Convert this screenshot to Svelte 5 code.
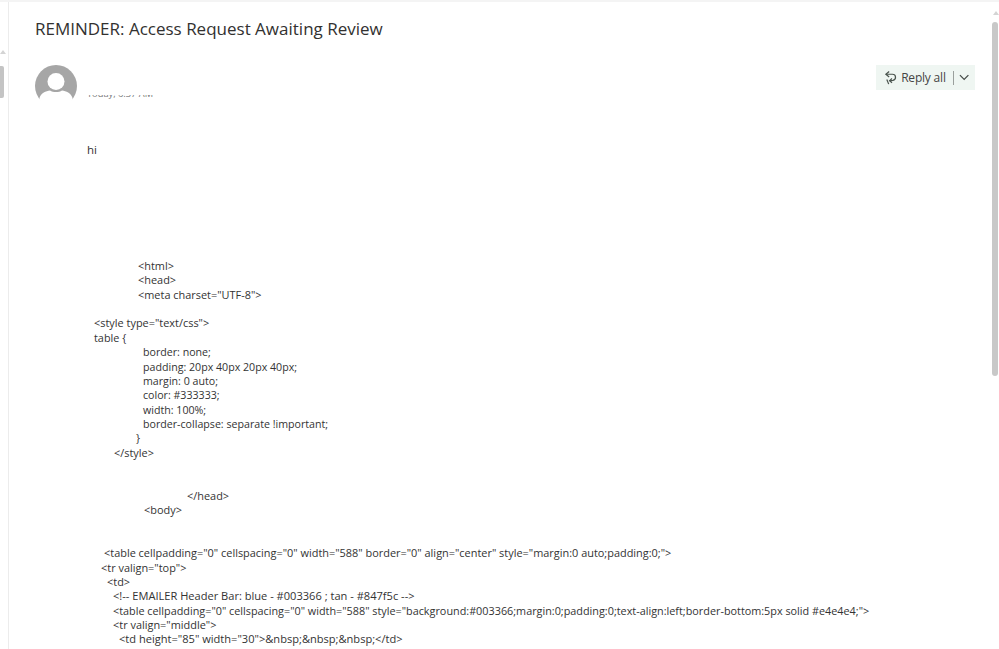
<script>
  const lines = [
    [51, '<html>', 'tag'], [51, '<head>', 'tag'], [51, '<meta charset="UTF-8">', 'tag'], [0, '', ''],
    [7, '<style type="text/css">', 'tag'], [7, 'table {', ''],
    [56, 'border: none;', 'rule'], [56, 'padding: 20px 40px 20px 40px;', 'rule'], [56, 'margin: 0 auto;', 'rule'],
    [56, 'color: #333333;', 'rule'], [56, 'width: 100%;', 'rule'], [56, 'border-collapse: separate !important;', 'rule'],
    [49, '}', ''], [27, '</style>', 'tag'], [0, '', ''], [0, '', ''],
    [100, '</head>', 'tag'], [57, '<body>', 'tag'], [0, '', ''], [0, '', ''],
    [17, '<table cellpadding="0" cellspacing="0" width="588" border="0" align="center" style="margin:0 auto;padding:0;">', 'tag'],
    [14, '<tr valign="top">', 'tag'], [20, '<td>', 'tag'],
    [26, '<!-- EMAILER Header Bar: blue - #003366 ; tan - #847f5c -->', 'note'],
    [26, '<table cellpadding="0" cellspacing="0" width="588" style="background:#003366;margin:0;padding:0;text-align:left;border-bottom:5px solid #e4e4e4;">', ''],
    [26, '<tr valign="middle">', 'tag'],
    [32, '<td height="85" width="30">&nbsp;&nbsp;&nbsp;</td>', 'note']
  ];
</script>

<div class="page">
  <div class="rail">
    <svg class="arrow" width="8" height="5" viewBox="0 0 8 5"><path d="M0 5 L3 1 L6 5 Z" fill="#d4d4d4"/></svg>
    <div class="rail-thumb"></div>
  </div>
  <main>
    <h1>REMINDER: Access Request Awaiting Review</h1>
    <div class="header">
      <svg class="avatar" width="42" height="42" viewBox="0 0 42 42">
        <circle cx="21" cy="21" r="21" fill="#a6a6a6"/>
        <circle cx="21" cy="16.5" r="8.5" fill="#fff"/>
        <path d="M4.500 33 C6 28 11 26 15 25.500 C18 27.500 24 27.500 27 25.500 C31 26 36 28 37.500 33 C38 38 30 43 21 43 C12 43 4 38 4.500 33 Z" fill="#fff"/>
      </svg>
      <div class="clip"><span>Today, 6:37 AM</span></div>
      <div class="reply">
        <svg width="14" height="16" viewBox="0 0 14 16" fill="none" stroke="#4a544e" stroke-width="1.300">
          <path d="M5.500 1 L2 4 L5.500 7"/>
          <path d="M2 4 H9 C13 4 13.500 9.500 9.500 10.500 L6 11"/>
          <path d="M8.500 13 L6 10.800 L8.500 8.500"/>
          <path d="M3 9.500 L5 14.500"/>
        </svg>
        <span class="label">Reply all</span>
        <span class="sep"></span>
        <svg width="11" height="7" viewBox="0 0 11 7" fill="none" stroke="#444a46" stroke-width="1.300"><path d="M1 1 L5.500 5.500 L10 1"/></svg>
      </div>
    </div>
    <p class="hi">hi</p>
    <div class="code">
      {#each lines as [indent, text, kind]}
        <div class="line {kind}" style="padding-left: {indent}px">{text}</div>
      {/each}
    </div>
  </main>
  <div class="bar">
    <svg class="arrow up" width="8" height="5" viewBox="0 0 8 5"><path d="M1 5 L4 1 L7 5 Z" fill="#d4d4d4"/></svg>
    <div class="bar-thumb"></div>
  </div>
</div>

<style>
  :global(body) { margin: 0; background: #fff; overflow: hidden; }
  .page {
    display: flex; height: 649px; box-sizing: border-box; overflow: hidden;
    border-top: 2px solid #f4f4f4; background: #fff;
    font-family: "Open Sans", "Noto Sans", sans-serif; color: #333;
  }
  .rail { width: 8px; flex: none; border-right: 1px solid #ececec; padding-top: 47px; }
  .rail .arrow { display: block; margin-bottom: 12px; }
  .rail-thumb { width: 4px; height: 32px; background: #c4c4c4; border-radius: 0 2px 2px 0; }
  main { flex: 1; min-width: 0; padding: 0 17px 0 26px; }
  h1 { margin: 15px 0 0; font-size: 17px; line-height: 24px; font-weight: 400; color: #323130; }
  .header { display: flex; align-items: flex-start; margin-top: 24px; height: 42px; }
  .avatar { flex: none; }
  .clip { margin: 30px 0 0 10px; height: 5px; width: 80px; overflow: hidden; position: relative; font-size: 9.300px; color: #777; }
  .clip span { position: absolute; left: 0; bottom: -1px; line-height: 14px; white-space: nowrap; }
  .reply {
    margin-left: auto; width: 99px; height: 25px; box-sizing: border-box; background: #eff6f2;
    display: flex; align-items: center; padding: 0 6px 0 8px; font-size: 12px; color: #454545;
  }
  .label { margin-left: 4px; letter-spacing: -0.2px; white-space: nowrap; }
  .sep { width: 1px; height: 14px; background: #9a9f9c; margin: 0 5px 0 7px; }
  .hi { margin: 35px 0 0 52px; font-size: 11.500px; line-height: 15px; color: #333; }
  .code { margin-top: 102px; margin-left: 52px; font-size: 10.830px; line-height: 14.37px; color: #333; white-space: pre; }
  .line { height: 14.37px; }
  .tag { font-size: 10.930px; }
  .rule { font-size: 10.650px; }
  .note { font-size: 11.080px; }
  .bar { width: 7px; flex: none; padding-top: 8px; }
  .bar .arrow { display: block; margin-bottom: 7px; }
  .bar-thumb { width: 6px; height: 354px; background: #c8c8c8; border-radius: 3px; }
</style>
